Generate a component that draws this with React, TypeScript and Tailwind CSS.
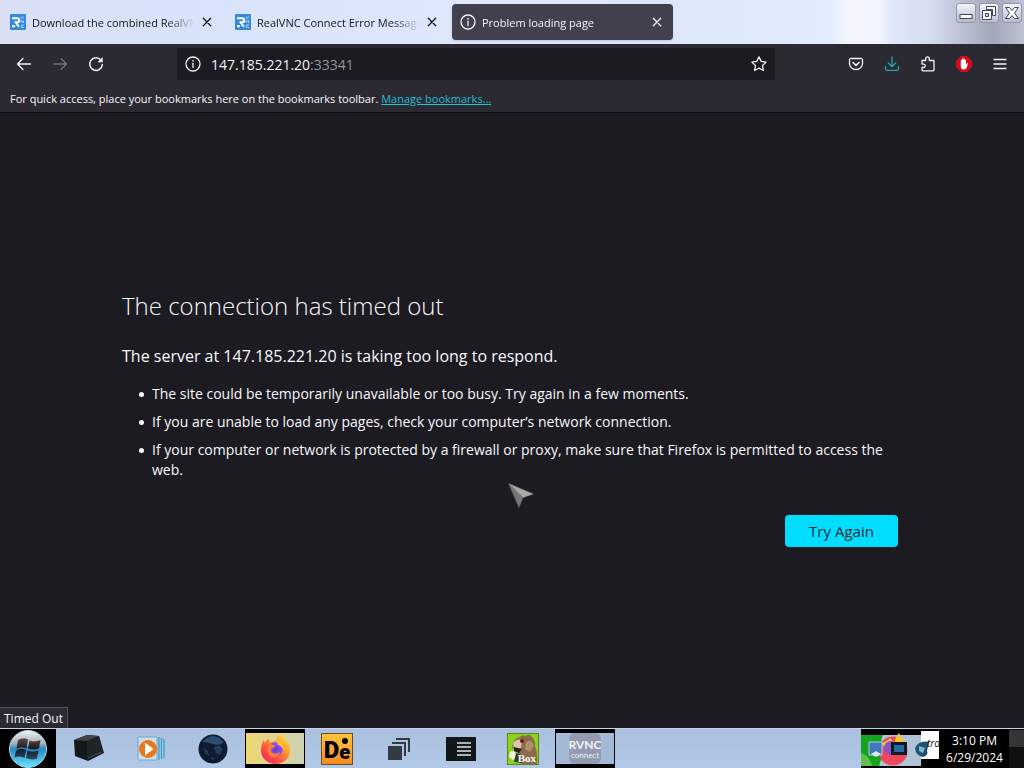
import React from "react";

type IconProps = { children: React.ReactNode; className?: string };

function Icon({ children, className = "size-4" }: IconProps) {
  return (
    <svg viewBox="0 0 16 16" fill="none" stroke="currentColor" strokeWidth="1.3" strokeLinecap="round" strokeLinejoin="round" className={`shrink-0 ${className}`} aria-hidden="true">
      {children}
    </svg>
  );
}

function InfoIcon() {
  return (
    <Icon>
      <circle cx="8" cy="8" r="7" />
      <path d="M8 7.3v4.2" />
      <circle cx="8" cy="4.8" r="0.9" fill="currentColor" stroke="none" />
    </Icon>
  );
}

function VncFavicon() {
  return (
    <svg viewBox="0 0 16 16" className="size-4 shrink-0" aria-hidden="true">
      <rect width="16" height="16" rx="1" fill="#3489dc" />
      <path d="M2 4.300h5.200a2 2 0 0 1 0 4H4.500M5.800 8.500l3.200 4.300M2 12.300h3.200" fill="none" stroke="#fff" strokeWidth="2" />
      <path d="M11 2.500l1.300 2.200 1.400-2.200M11 9V6.500l2.600 2.300V6.300M14 11h-2.600v2.500H14" fill="none" stroke="#b5dcf8" strokeWidth="0.9" />
    </svg>
  );
}

type TabProps = { title: string; icon: React.ReactNode; active?: boolean };

function Tab({ title, icon, active = false }: TabProps) {
  return (
    <div className={`flex h-9 w-[221px] min-w-0 items-center rounded px-2 ${active ? "bg-[#42404d] text-[#f5f4fa] shadow-sm" : "text-[#15141a]"}`}>
      {icon}
      <button role="tab" aria-selected={active} className="ml-1.5 min-w-0 flex-1 overflow-hidden whitespace-nowrap pt-px text-left text-[11px] leading-5 [mask-image:linear-gradient(to_right,black_calc(100%-28px),transparent)]">
        {title}
      </button>
      <button aria-label={`Close ${title}`} className="ml-1 flex size-4 items-center justify-center">
        <Icon className="size-4"><path d="M4.300 4.300l7.400 7.400M11.700 4.300l-7.400 7.400" /></Icon>
      </button>
    </div>
  );
}

function ToolButton({ label, children, className = "text-[#f3f2f8]" }: { label: string; children: React.ReactNode; className?: string }) {
  return (
    <button aria-label={label} className={`flex h-8 w-9 shrink-0 items-center justify-center ${className}`}>
      {children}
    </button>
  );
}

function WindowButton({ label, children }: { label: string; children: React.ReactNode }) {
  return (
    <button aria-label={label} className="flex h-5 w-5 items-center justify-center rounded-[3px] border border-[#9196ab] bg-linear-to-b from-[#f4f6fc] to-[#b7bccd]">
      <svg viewBox="0 0 16 16" className="size-4" fill="none" aria-hidden="true">{children}</svg>
    </button>
  );
}

function TitleBar() {
  return (
    <header className="flex h-11 items-start justify-between bg-[linear-gradient(to_right,#dbe0f4_0%,#d8e3f9_18%,#dfe7fb_45%,#dde8fb_70%,#e3ecfd_81%,#f3f6ff_83%,#f1f5ff_86%,#e2e9fb_87%,#d5dcf0_91%,#bcc1d3_94%,#a3a7ba_97%,#c0c3d3_100%)]">
      <div role="tablist" className="flex min-w-0 gap-1 pl-0.5 pt-1">
        <Tab title="Download the combined RealVNC" icon={<VncFavicon />} />
        <Tab title="RealVNC Connect Error Messages" icon={<VncFavicon />} />
        <Tab title="Problem loading page" icon={<InfoIcon />} active />
      </div>
      <div className="flex justify-end gap-[3px] pr-0.5 pt-[3px]">
        <WindowButton label="Minimize">
          <rect x="2" y="9.5" width="12" height="4" fill="#fff" stroke="#3c4365" />
        </WindowButton>
        <WindowButton label="Restore">
          <path d="M5.5 1.5h9v9h-3v-6h-6z" fill="#fff" stroke="#3c4365" />
          <path d="M1.5 5.5h9v9h-9zM4.5 8.5h3v3h-3z" fill="#fff" fillRule="evenodd" stroke="#3c4365" />
        </WindowButton>
        <WindowButton label="Close">
          <path d="M1.5 2.5h4L8 5.500l2.500-3h4L10.500 8l4 5.500h-4L8 10.500l-2.500 3h-4l4-5.500z" fill="#fff" stroke="#3c4365" />
        </WindowButton>
      </div>
    </header>
  );
}

function Toolbar() {
  return (
    <nav className="flex h-10 items-center bg-[#2b2a33] px-1.5">
      <ToolButton label="Back"><Icon><path d="M14.500 8H1.500M7 2.500L1.500 8 7 13.500" /></Icon></ToolButton>
      <ToolButton label="Forward" className="text-[#73727a]"><Icon><path d="M1.500 8h13M9 2.500L14.500 8 9 13.500" /></Icon></ToolButton>
      <ToolButton label="Reload">
        <Icon>
          <path d="M13 4.200A6.300 6.300 0 1 0 14.300 8.500" strokeWidth="1.500" />
          <path d="M14.700 1v5.200H9.500z" fill="currentColor" stroke="none" />
        </Icon>
      </ToolButton>
      <div className="mx-[63px] flex h-8 min-w-0 flex-1 items-center bg-[#1c1b22] px-2 text-[#f3f2f8]">
        <InfoIcon />
        <div className="relative ml-[10px] flex-1 pt-px text-sm leading-5">
          <input aria-label="Address" defaultValue="147.185.221.20:33341" className="block w-full bg-transparent text-transparent caret-white outline-none" />
          <span aria-hidden="true" className="pointer-events-none absolute inset-0 pt-px">147.185.221.20<span className="text-[#95949c]">:33341</span></span>
        </div>
        <button aria-label="Bookmark this page">
          <Icon><path d="M8 .9l2.200 4.500 4.900.7-3.600 3.500.9 4.900L8 12.200l-4.400 2.300.9-4.900L.9 6.100l4.900-.7z" /></Icon>
        </button>
      </div>
      <ToolButton label="Save to Pocket">
        <Icon>
          <path d="M2.800 2.500h10.400a1.300 1.300 0 0 1 1.300 1.300V7.500a6.500 6 0 0 1-13 0V3.800A1.300 1.300 0 0 1 2.800 2.500z" />
          <path d="M5 6.500L8 9.300l3-2.800" strokeWidth="1.600" />
        </Icon>
      </ToolButton>
      <ToolButton label="Downloads" className="text-[#1fa9ab]">
        <Icon><path d="M8 .8v9.700M4.300 7L8 10.700 11.700 7M1.500 10.500v2.300a1.500 1.500 0 0 0 1.500 1.500h10a1.500 1.500 0 0 0 1.500-1.500v-2.300" /></Icon>
      </ToolButton>
      <ToolButton label="Extensions">
        <Icon><path d="M2 4.500h3.700V2.700a1.800 1.800 0 0 1 3.600 0v1.800H13.200q.8 0 .8.800V14q0 .800-.800.800H2.800Q2 14.800 2 14v-2.500h1.600a1.700 1.700 0 0 0 0-3.400H2z" /></Icon>
      </ToolButton>
      <ToolButton label="AdBlock">
        <svg viewBox="0 0 16 16" className="size-4" aria-hidden="true">
          <path d="M5 0h6l5 5v6l-5 5H5l-5-5V5z" fill="#d90b19" />
          <path d="M4.800 8.500V4.200q.6-.8 1.200 0V3q.6-.9 1.300 0v-.4q.7-.8 1.400.2V4q.7-.8 1.300.2v4l1.200-1.200q.9-.3.8.5L10.700 11.500Q9.800 13.500 8 13.500q-3.200 0-3.200-3z" fill="#fff" />
        </svg>
      </ToolButton>
      <ToolButton label="Open application menu"><Icon><path d="M2 3.500h12M2 8h12M2 12.500h12" /></Icon></ToolButton>
    </nav>
  );
}

function BookmarksBar() {
  return (
    <div className="flex h-[29px] items-center border-b border-[#0c0c0d] bg-[#2b2a33] px-[10px] pt-0.5 text-[11px] leading-5 text-[#f7f7fa]">
      <p>For quick access, place your bookmarks here on the bookmarks toolbar. <a href="#bookmarks" className="text-[#23bfd4] underline">Manage bookmarks…</a></p>
    </div>
  );
}

function Cursor() {
  return (
    <svg viewBox="0 0 26 26" className="pointer-events-none absolute left-[508px] top-[370px] size-[26px]" aria-hidden="true">
      <path d="M0 0L26 11 15 15 11 25z" fill="#666" stroke="#3c3c3c" strokeWidth=".6" />
      <path d="M1 .8L25 11 15 14.500z" fill="#a9a9a9" />
      <path d="M1 1L15 14.500 11 24z" fill="#777" />
    </svg>
  );
}

const HINTS = [
  "The site could be temporarily unavailable or too busy. Try again in a few moments.",
  "If you are unable to load any pages, check your computer’s network connection.",
  "If your computer or network is protected by a firewall or proxy, make sure that Firefox is permitted to access the web.",
];

function ErrorPage() {
  return (
    <main className="relative flex flex-1 flex-col justify-center bg-[#1c1b22] pb-1.5 pl-[122px] pr-[126px] text-[#f8f8fb]">
      <h1 className="text-2xl font-light leading-9">The connection has timed out</h1>
      <p className="mt-5 text-base leading-6">The server at 147.185.221.20 is taking too long to respond.</p>
      <ul className="mt-4 space-y-2 pl-[17px] text-sm leading-5">
        {HINTS.map((hint) => (
          <li key={hint} className="flex gap-2 before:mt-2 before:size-[5px] before:shrink-0 before:rounded-full before:bg-current">{hint}</li>
        ))}
      </ul>
      <button className="mt-[35px] h-8 w-[113px] self-end rounded bg-[#00ddff] text-[15px] text-[#2b2a33]">Try Again</button>
      <Cursor />
      <div role="status" className="absolute bottom-0 left-0 h-[21px] border border-b-0 border-l-0 border-[#52525e] bg-[#2b2a33] px-1 text-xs leading-[21px]">Timed Out</div>
    </main>
  );
}

function Task({ label, children, className = "" }: { label: string; children: React.ReactNode; className?: string }) {
  return <button aria-label={label} className={`flex h-10 w-[60px] items-center justify-center ${className}`}>{children}</button>;
}

function StartOrb() {
  return (
    <svg viewBox="0 0 40 40" className="size-10" aria-hidden="true">
      <defs>
        <linearGradient id="orb" x2="0" y2="1"><stop stopColor="#f2f2f2" /><stop offset=".35" stopColor="#a9b0b6" /><stop offset=".5" stopColor="#2489c4" /><stop offset="1" stopColor="#6be4ff" /></linearGradient>
        <linearGradient id="pane" x2="0" y2="1"><stop stopColor="#5b4d4f" /><stop offset=".5" stopColor="#15181f" /><stop offset="1" stopColor="#2d4863" /></linearGradient>
      </defs>
      <circle cx="20" cy="20" r="18.500" fill="url(#orb)" stroke="#a6dcf1" />
      <path d="M10 11q5-3 10-.5l-1.500 9q-5-2-10 .5zM21.500 11.500q5 2 11-.5l-1.500 8.500q-5 2-11 0zM8 21.500q5-3 10-.5l-1.500 8q-5-2.500-10-.5zM19.500 21.500q5 2 11 0l-1.500 8q-5 2-11-.5z" fill="url(#pane)" />
    </svg>
  );
}

function FirefoxLogo() {
  return (
    <svg viewBox="0 0 32 32" className="size-[31px]" aria-hidden="true">
      <defs>
        <linearGradient id="fox" x1="1" x2="0.200" y2="1"><stop stopColor="#fff044" /><stop offset=".35" stopColor="#ffad2d" /><stop offset=".7" stopColor="#ff563b" /><stop offset="1" stopColor="#f0236c" /></linearGradient>
        <radialGradient id="globe"><stop stopColor="#5943d7" /><stop offset="1" stopColor="#9a4cf0" /></radialGradient>
      </defs>
      <path d="M4 7q0 2 1 3 2-3 4-4 0 3 2 4 3-2 6-2 0-4 4-8 1 4 4 6 6 5 6 12A15 14 0 0 1 1 18q0-6 3-11z" fill="url(#fox)" />
      <circle cx="16" cy="17" r="7.500" fill="url(#globe)" />
      <path d="M7 14q3-4 6-2l3 1q-1 2-4 3-2 3 2 5 4 1 7-2-1 5-7 6-7 0-7-11z" fill="#ff7f39" />
      <path d="M18 8q7 2 7 11-2-6-7-7z" fill="#ffc33e" />
    </svg>
  );
}

function TaskIcons() {
  return (
    <div className="flex gap-0.5 pl-[3px]">
      <Task label="Computer">
        <svg viewBox="0 0 32 30" className="h-[30px] w-8" aria-hidden="true">
          <path d="M1 6L14 1l12 1 5 17-16 8L2 22z" fill="#15181b" /><path d="M1 6l13-5 12 1-12 5z" fill="#3e4346" /><path d="M14 7l12-5 4 16-16 8z" fill="#202426" /><path d="M15 24l14-6" stroke="#4b5156" />
        </svg>
      </Task>
      <Task label="Media Player">
        <svg viewBox="0 0 28 26" className="h-[26px] w-7" aria-hidden="true">
          <path d="M1 1h19v23H1z" fill="#cfddec" stroke="#6da9c8" /><path d="M22 1v23M24.500 2v21M27 3v19" stroke="#3b9fc4" strokeWidth="1.200" /><circle cx="11" cy="13" r="9" fill="#e9781c" /><path d="M8 6.500L16.500 13 8 19.500z" fill="#fff" />
        </svg>
      </Task>
      <Task label="Globe">
        <svg viewBox="0 0 30 30" className="size-[30px]" aria-hidden="true">
          <circle cx="15" cy="15" r="14.500" fill="#0c1b30" /><path d="M4 8q11-12 22 0-4 4-11 2T4 8z" fill="#2b4c6e" /><path d="M6 14l4 3 1 5-4-3zM16 13l5-2 4 4-3 6-4-2zM12 23l5 1-2 2z" fill="#243c55" />
        </svg>
      </Task>
      <Task label="Firefox" className="border-x border-b-[5px] border-t-4 border-black bg-linear-to-r from-[#efd66d] to-[#cbd2b2]"><FirefoxLogo /></Task>
      <Task label="De">
        <span className="relative flex size-8 items-end justify-center border border-[#6c4c22] bg-linear-to-b from-[#ffc33c] to-[#f28b24] font-['Roboto'] font-black text-black">
          <span className="text-2xl leading-7">D</span>
          <span className="text-xl leading-6">e</span>
          <span className="absolute right-1 top-1 size-1.5 rounded-full bg-black" />
        </span>
      </Task>
      <Task label="Windows">
        <svg viewBox="0 0 22 22" className="size-[22px]" fill="none" stroke="#343a42" strokeWidth="2" aria-hidden="true"><path d="M0 8h14v14H0z" fill="#343a42" stroke="none" /><path d="M4 5h13v13M8 1h13v13" /></svg>
      </Task>
      <Task label="Console">
        <svg viewBox="0 0 30 24" className="h-6 w-[30px]" aria-hidden="true"><path d="M0 0h30v24H0z" fill="#111719" /><path d="M11 6h14M11 10h14M11 14h14M11 18h14" stroke="#e2e5e6" strokeWidth="1.500" /></svg>
      </Task>
      <Task label="Rat Box">
        <span className="relative size-8 overflow-hidden border border-[#578818] bg-[#8ed31b]">
          <svg viewBox="0 0 30 30" className="size-full" aria-hidden="true">
            <path d="M5 9q2-5 7-6 2-3 6-1 3-3 6 1 4 3 3 9 3 7 2 18H13L9 17l-5-3z" fill="#8a6b4c" />
            <path d="M5 9q4-5 9-3l-1 8-7 1z" fill="#d8c9ab" />
            <circle cx="14" cy="7" r="2" fill="#7a1a14" />
            <path d="M18 8q6-3 8 4l-4 6-5-3z" fill="#b08f6b" />
            <path d="M6 13l8 2-3 4-5-2z" fill="#2c2119" />
            <path d="M2 18q2-2 5 0l2 5-4 3-4-3z" fill="#f4f0e2" />
            <path d="M8 19l5 2 1 8-8-1z" fill="#33402a" />
          </svg>
          <span className="absolute bottom-0 right-0.5 font-['Liberation_Serif'] text-[11px] font-bold leading-3 text-white">Box</span>
        </span>
      </Task>
      <Task label="RealVNC Connect" className="border-x border-b-[5px] border-t-4 border-black bg-[#a3b9d6]">
        <span className="flex h-[31px] w-8 flex-col items-center justify-center rounded-md bg-[#929bb0] font-['Lato'] text-[#f1f3f8]">
          <b className="text-xs leading-3">RVNC</b><span className="text-[8px] leading-2">connect</span>
        </span>
      </Task>
    </div>
  );
}

function Tray() {
  return (
    <div className="flex">
      <svg viewBox="0 0 79 40" className="h-10 w-[79px]" aria-label="Notification icons" role="img">
        <path d="M0 0h79v40H0z" fill="#000" />
        <path d="M0 6h60v31H0z" fill="#b3c3d7" />
        <path d="M0 6h22q-4 8 1 16L18 37H0z" fill="#14a31d" />
        <path d="M0 24q9 3 11 13H0z" fill="#5fc04a" />
        <circle cx="32" cy="22" r="14.500" fill="#ee475a" />
        <path d="M20 14q6-1 9-5 2 3 5 4 0-5 4-9 3 6 7 10l1 9H28z" fill="#f4c43a" />
        <circle cx="30" cy="19" r="7" fill="#8a55cb" />
        <path d="M8 13h13v13H8z" fill="#4277ba" stroke="#a8cef0" />
        <path d="M10 25l5-3 5 3-5 3z" fill="#d6e5ef" />
        <path d="M30 13h16v13H30z" fill="#111923" />
        <path d="M33 16h10v7H33z" fill="#276b9c" />
        <path d="M60 2h18v28H60z" fill="#fff" />
        <path d="M54 19q4-8 14-6l-2 9q2 4-4 6-7-1-8-9z" fill="#1f5270" />
        <path d="M58 17l6 2-2 5-4-2z" fill="#84b8d0" />
        <text x="66" y="18" fill="#111" fontFamily="Open Sans, sans-serif" fontStyle="italic" fontSize="10">tro</text>
      </svg>
      <time className="w-[69px] bg-black pt-[3px] text-center text-xs leading-[17px] text-white" dateTime="2024-06-29T15:10">3:10 PM<br />6/29/2024</time>
      <button aria-label="Show desktop" className="h-10 w-[15px] border-b-[22px] border-t border-b-[#101010] border-t-black bg-[#353535]" />
    </div>
  );
}

export default function App() {
  return (
    <div className="flex min-h-screen flex-col bg-[#1c1b22] font-['Open_Sans','Noto_Sans',sans-serif]">
      <TitleBar />
      <Toolbar />
      <BookmarksBar />
      <ErrorPage />
      <footer className="flex h-10 justify-between border-t border-[#c5d4e7] bg-linear-to-b from-[#a9c1df] to-[#b1c9e7]">
        <div className="flex"><button aria-label="Start" className="flex w-14 items-center justify-center bg-black"><StartOrb /></button><TaskIcons /></div>
        <Tray />
      </footer>
    </div>
  );
}
